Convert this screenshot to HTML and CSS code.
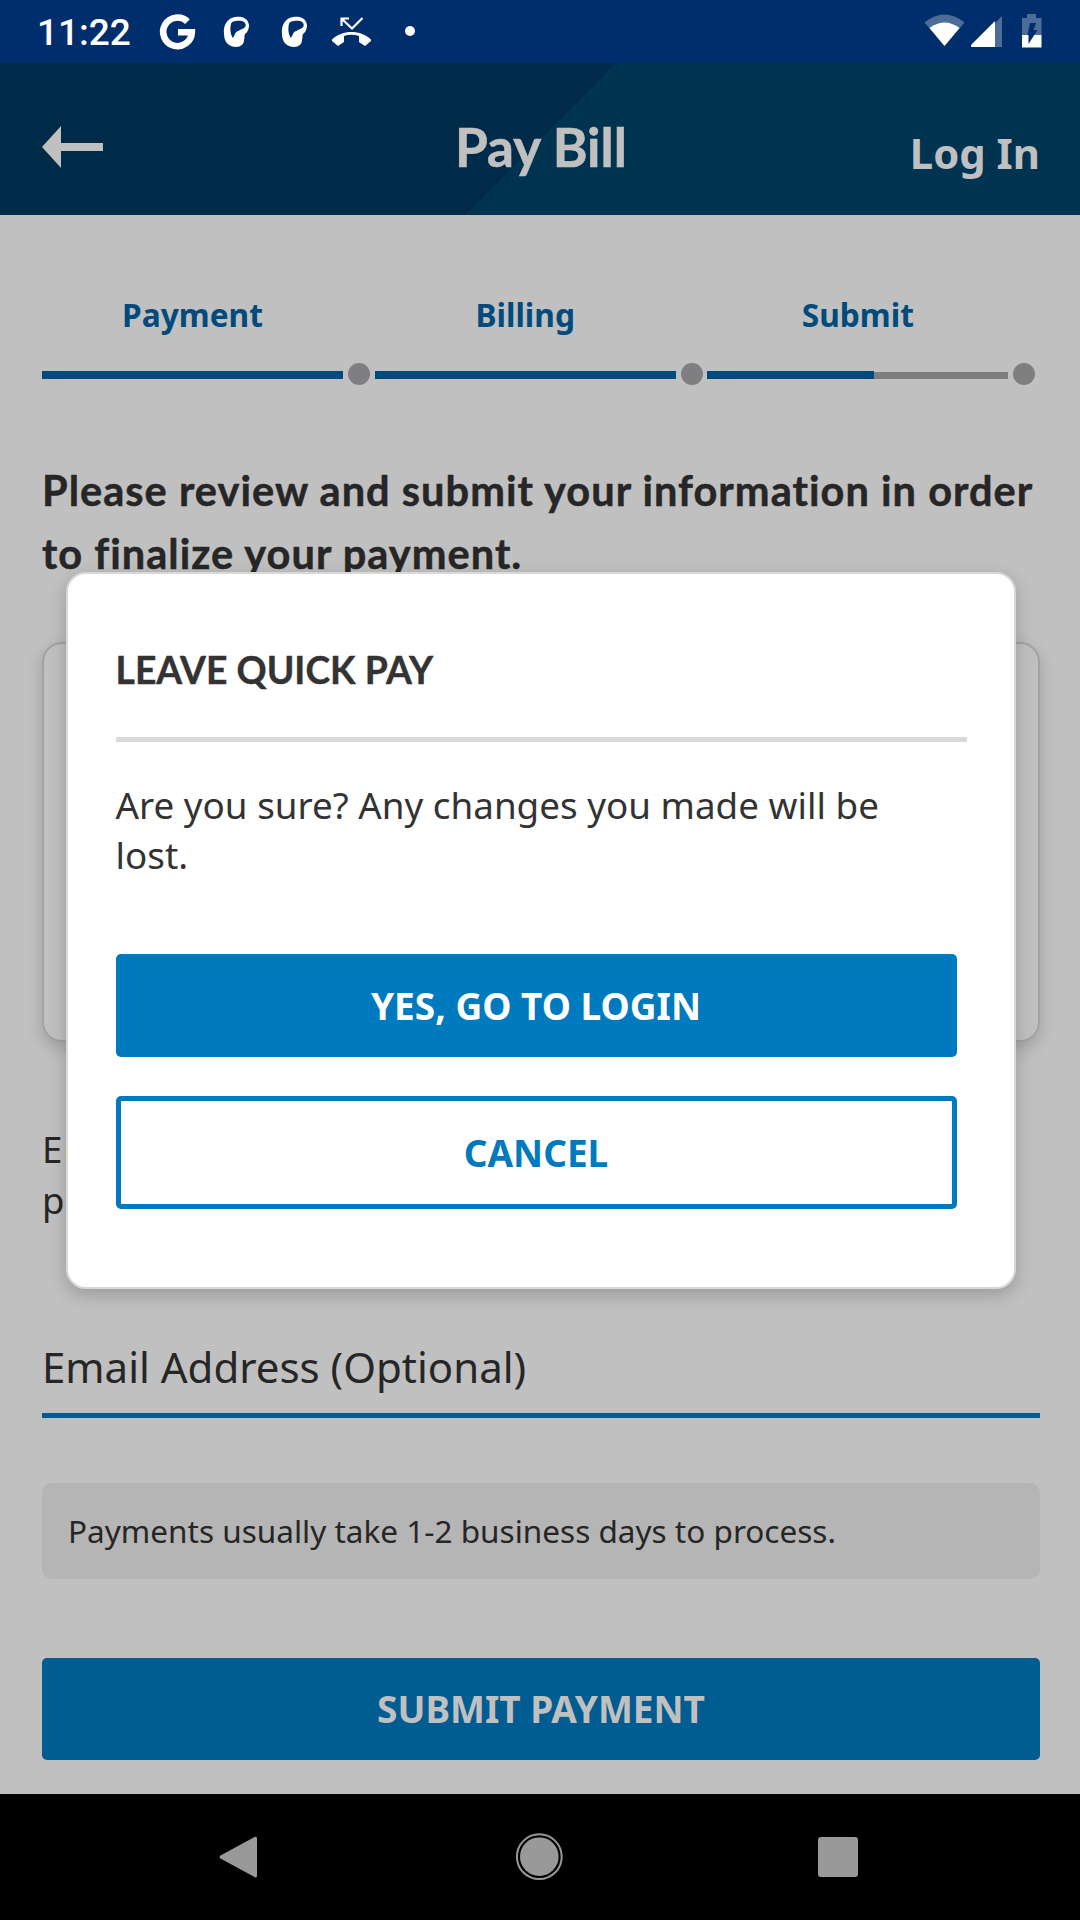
FILE: index.html
```html
<!DOCTYPE html>
<html lang="en">
<head>
<meta charset="utf-8">
<title>Pay Bill</title>
<link rel="stylesheet" href="styles.css">
</head>
<body>
<div class="screen">
  <div class="status">
    <span class="time">11:22</span>
    <svg class="status-left" width="280" height="55" viewBox="150 5 280 55" fill="#fff">
      <path d="M187.500 21.600A14.300 14.300 0 1 0 191.800 32.300H178" fill="none" stroke="#fff" stroke-width="6.600"/>
      <g id="head">
        <path fill-rule="evenodd" d="M235 17C227 18 223 26 224 34C224 42 229 47 236 47C241 47 244 44 244 40C245 37 244 35 245 34C248 32 249 28 249 25C248 18 242 16 235 17ZM231 24C230 28 230 34 233 38L235 34C236 31 241 30 244 28C247 26 246 22 242 21C238 20 231 21 231 24Z"/>
      </g>
      <use href="#head" x="58"/>
      <path d="M332 39.500C342 29.500 361 29.500 371 39.500V41L365 46L359 42V36Q351.500 33.500 344 36V42L338 46L332 41Z"/>
      <path d="M341.500 26V18.500H349M342 19L352 28.500L362.500 18" fill="none" stroke="#fff" stroke-width="2.200"/>
      <circle cx="410" cy="31" r="5"/>
    </svg>
    <svg class="status-right" width="130" height="55" viewBox="920 5 130 55">
      <path d="M944.500 46L924.500 22.500Q944.500 6.500 964.500 22.500Z" fill="#4d6c97"/>
      <path d="M944.500 46L929.500 28Q944.500 17 959.500 28Z" fill="#fff"/>
      <path d="M1002 16V47H971Z" fill="#4d6c97"/><path d="M995 21V47H971V45Z" fill="#fff"/>
      <path d="M1027 14H1036V18H1041.500V35H1022V18H1027Z" fill="#4d6c97"/>
      <path d="M1022 35H1041.500V47.500H1022Z" fill="#fff"/>
      <path d="M1030 23H1036L1033.500 30H1037.500L1028.500 44V35H1027.500Z" fill="#002d6b"/>
    </svg>
  </div>
  <header class="header">
    <svg class="back" width="61" height="42" viewBox="0 0 61 42"><path d="M0 21L19 0V17H61V25H19V42Z" fill="#c0c0c0"/></svg>
    <h1 class="title">Pay Bill</h1>
    <span class="login">Log In</span>
  </header>
  <main class="content">
    <div class="steps">
      <div class="step"><span class="label">Payment</span><span class="bar"></span><span class="dot"></span></div>
      <div class="step"><span class="label">Billing</span><span class="bar"></span><span class="dot"></span></div>
      <div class="step"><span class="label">Submit</span><span class="bar current"></span><span class="dot"></span></div>
    </div>
    <h2 class="intro">Please review and submit your information in order<br>to finalize your payment.</h2>
    <section class="card"></section>
    <p class="note">En<br>p</p>
    <label class="field">Email Address (Optional)</label>
    <p class="notice">Payments usually take 1-2 business days to process.</p>
    <button class="button submit">SUBMIT PAYMENT</button>
  </main>
  <nav class="nav">
    <svg width="1080" height="126" viewBox="0 1794 1080 126" fill="#999">
      <path d="M220.500 1855.500L254.500 1837Q257 1836 257 1838.500V1875.500Q257 1878.500 254.500 1877L220.500 1858.500Q218.500 1857 220.500 1855.500Z"/>
      <circle cx="539.300" cy="1856.700" r="19.300"/>
      <circle cx="539.300" cy="1856.700" r="22.400" fill="none" stroke="#999" stroke-width="2"/>
      <rect x="818" y="1837" width="40" height="40" rx="3"/>
    </svg>
  </nav>
  <div class="dialog" role="dialog">
    <h2 class="dialog-title">LEAVE QUICK PAY</h2>
    <p class="dialog-text">Are you sure? Any changes you made will be<br>lost.</p>
    <button class="button yes">YES, GO TO LOGIN</button>
    <button class="button cancel">CANCEL</button>
  </div>
</div>
</body>
</html>
```
FILE: styles.css
```css
* { box-sizing: border-box; }
body { margin: 0; font-family: "Noto Sans", sans-serif; }
h1, h2, p { margin: 0; }
.screen { position: relative; width: 1080px; height: 1920px; overflow: hidden; background: #c0c0c0; color: #262626; display: flex; flex-direction: column; }

.status { height: 63px; flex: none; background: #002d6b; color: #fff; display: flex; align-items: flex-start; padding: 5px 30px 0 37px; }
.time { width: 113px; font: 500 37px/56px Roboto, sans-serif; white-space: nowrap; }
.status-right { margin-left: auto; }

.header { position: relative; height: 152px; flex: none; padding: 0 40px 0 42px; display: grid; grid-template-columns: 1fr auto 1fr; background: #003350; color: #c0c0c0; }
.header::before { content: ""; position: absolute; inset: 0; background: #002b48; clip-path: polygon(0 0, 616px 0, 465px 100%, 0 100%); }
.header > * { position: relative; }
.back { margin-top: 63px; }
.title { font: 700 53px/60px Lato, sans-serif; margin-top: 54px; -webkit-text-stroke: .6px currentColor; }
.login { justify-self: end; font-weight: 700; font-size: 41.800px; line-height: 60px; margin-top: 60px; }

.content { flex: 1; padding: 75px 40px 0 42px; display: flex; flex-direction: column; }
.steps { display: grid; grid-template-columns: repeat(3, 1fr); height: 110px; }
.step { display: grid; grid-template-columns: 301px 22px; column-gap: 5px; grid-template-rows: 73px 22px; align-items: center; }
.label { grid-column: 1 / -1; width: 301px; align-self: start; text-align: center; font-weight: 700; font-size: 31.700px; line-height: 50px; color: #004b7b; }
.bar { height: 8px; background: #004b7b; margin-top: 2px; }
.bar.current { background: linear-gradient(90deg, #004b7b 167px, transparent 167px), linear-gradient(#c0c0c0 1px, #7f7f81 1px); }
.dot { width: 22px; height: 22px; border-radius: 50%; background: #7f7f81; }

.intro { margin-top: 59px; height: 125px; font: 700 41.500px/63px Lato, sans-serif; letter-spacing: 1.040px; white-space: nowrap; -webkit-text-stroke: .5px currentColor; }
.card { margin-top: 58px; height: 400px; flex: none; border: 2px solid #a2a2a2; border-radius: 20px; box-shadow: 0 6px 16px rgba(0, 0, 0, .17); }
.note { margin-top: 82px; font-size: 36.500px; line-height: 51px; letter-spacing: 1px; }
.field { margin-top: 99px; height: 93px; border-bottom: 5px solid #005c91; font-size: 42px; line-height: 84px; }
.notice { margin-top: 65px; height: 96px; padding: 0 26px; border-radius: 10px; background: #b5b5b5; font-size: 31.520px; line-height: 96px; }
.button { display: block; padding: 0; border: 0; border-radius: 5px; font: 700 37px/102px "Noto Sans", sans-serif; text-align: center; }
.submit { margin-top: 79px; height: 102px; background: #005c91; color: #c0c0c0; }

.nav { height: 126px; flex: none; background: #000; }
.nav svg { display: block; }

.dialog { position: absolute; left: 65.500px; top: 571.500px; width: 950.500px; height: 717px; padding: 66px 47.500px 0 48px; background: #fff; border: 2px solid #d8d8d4; border-radius: 20px; box-shadow: 0 6px 18px rgba(0, 0, 0, .2); color: #333; }
.dialog-title { height: 102.500px; border-bottom: 5px solid #d9d9d7; font: 700 37.300px/60px Lato, sans-serif; -webkit-text-stroke: .4px currentColor; }
.dialog-text { margin-top: 38px; height: 174px; font-size: 36.800px; line-height: 50px; white-space: nowrap; }
.yes { width: 841px; height: 103px; background: #007abe; color: #fff; line-height: 102px; }
.cancel { width: 841px; height: 113px; margin-top: 39px; border: 5px solid #007abe; background: #fff; color: #007abe; line-height: 103px; }
```
